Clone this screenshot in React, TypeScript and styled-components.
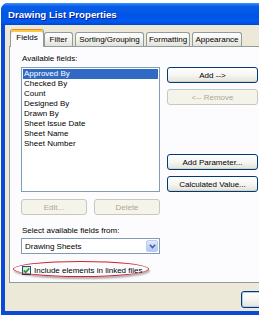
import React from "react";
import styled, { createGlobalStyle, css } from "styled-components";

const GlobalStyle = createGlobalStyle`
  html, body {
    margin: 0;
    padding: 0;
    background: #ffffff;
  }
  #root {
    width: 259px;
    height: 320px;
    overflow: hidden;
  }
`;

const FONT = `"Liberation Sans", Arial, sans-serif`;

const Window = styled.div`
  margin: 3px 0 0 1px;
  width: 330px;
  height: 312px;
  display: flex;
  flex-direction: column;
  border-radius: 7px 7px 0 0;
  overflow: hidden;
  background: #0b4ad6;
  font-family: ${FONT};
`;

const TitleBar = styled.div`
  height: 22px;
  flex: none;
  display: flex;
  align-items: center;
  padding-left: 7px;
  background: linear-gradient(
    180deg,
    #3d95ff 0%,
    #0a5fe8 14%,
    #0055e5 50%,
    #0058ee 85%,
    #0047d0 100%
  );
  color: #ffffff;
  font-weight: bold;
  font-size: 9.7px;
  text-shadow: 1px 1px 0 #0a1b8a;
`;

const Client = styled.div`
  flex: 1;
  margin: 0 0 4px 4px;
  background: #ece9d8;
  padding-top: 5px;
  display: flex;
  flex-direction: column;
`;

const TabStrip = styled.div`
  display: flex;
  align-items: flex-end;
  gap: 2px;
  height: 17px;
  margin: 0 0 -1px 5px;
  position: relative;
  z-index: 2;
`;

const Tab = styled.div<{ $w: number; $active?: boolean }>`
  width: ${(p) => p.$w}px;
  box-sizing: border-box;
  height: 14px;
  margin-bottom: 1px;
  display: flex;
  align-items: center;
  justify-content: center;
  font-size: 8px;
  color: #000000;
  border: 1px solid #919b9c;
  border-bottom: none;
  border-radius: 3px 3px 0 0;
  background: linear-gradient(#ffffff, #f3f3ef 50%, #e3e2da);

  ${(p) =>
    p.$active &&
    css`
      height: 18px;
      margin-bottom: 0;
      margin-right: -2px;
      padding-bottom: 3px;
      background: #fcfcfe;
      border-top-color: #e68b2c;
      box-shadow: inset 0 2px 0 #ffc73c;
    `}
`;

const Panel = styled.div`
  margin-left: 4px;
  height: 237px;
  box-sizing: border-box;
  border: 1px solid #919b9c;
  border-right: none;
  background: #fcfcfe;
  padding: 7px 0 0 11px;
  display: flex;
  flex-direction: column;
`;

const Label = styled.div<{ $top?: number }>`
  height: 10px;
  line-height: 10px;
  font-size: 8px;
  color: #000000;
  margin-top: ${(p) => p.$top ?? 0}px;
  padding-left: 1px;
`;

const MainRow = styled.div`
  display: flex;
  gap: 7px;
  margin-top: 3px;
  height: 125px;
`;

const ListBox = styled.div`
  width: 139px;
  height: 125px;
  box-sizing: border-box;
  border: 1px solid #7f9db9;
  background: #ffffff;
  padding: 1px;
`;

const ListItem = styled.div<{ $selected?: boolean }>`
  height: 10px;
  line-height: 10px;
  font-size: 8px;
  padding-left: 1px;
  color: ${(p) => (p.$selected ? "#ffffff" : "#000000")};
  background: ${(p) => (p.$selected ? "#316ac5" : "transparent")};
`;

const ButtonColumn = styled.div`
  width: 91px;
  display: flex;
  flex-direction: column;
  justify-content: space-between;
`;

const ButtonGroup = styled.div`
  display: flex;
  flex-direction: column;
  gap: 6px;
`;

const Button = styled.button<{ $w?: number }>`
  width: ${(p) => (p.$w ? `${p.$w}px` : "100%")};
  height: 16px;
  box-sizing: border-box;
  padding: 0;
  border: 1px solid #003c74;
  border-radius: 3px;
  background: linear-gradient(#ffffff, #f4f4f0 55%, #e3e2da);
  box-shadow: inset 0 -1px 0 #d6d0c5;
  font-family: ${FONT};
  font-size: 8px;
  color: #000000;
  flex: none;

  &:disabled {
    border-color: #c9c7ba;
    background: #f5f4ea;
    box-shadow: none;
    color: #aca899;
  }
`;

const EditRow = styled.div`
  display: flex;
  gap: 7px;
  margin-top: 7px;
`;

const Combo = styled.div`
  margin-top: 2px;
  width: 139px;
  height: 16px;
  box-sizing: border-box;
  border: 1px solid #7f9db9;
  background: #ffffff;
  display: flex;
  align-items: center;
  padding: 1px;
`;

const ComboText = styled.div`
  flex: 1;
  font-size: 8px;
  padding-left: 2px;
  color: #000000;
`;

const ComboArrow = styled.div`
  width: 12px;
  height: 12px;
  box-sizing: border-box;
  border: 1px solid #b9cdf7;
  border-radius: 2px;
  background: linear-gradient(#e1eafe, #c1d3fb 60%, #b4c8f6);
  display: flex;
  align-items: center;
  justify-content: center;
`;

const CheckRow = styled.div`
  position: relative;
  margin-top: 11px;
  height: 10px;
  display: flex;
  align-items: center;
  gap: 3px;
  padding-left: 1px;
  font-size: 8px;
  color: #000000;
`;

const CheckBox = styled.div`
  width: 9px;
  height: 9px;
  box-sizing: border-box;
  border: 1px solid #1c5180;
  background: linear-gradient(135deg, #dcdcd7, #ffffff);
  display: flex;
  align-items: center;
  justify-content: center;
`;

const Highlight = styled.div`
  position: absolute;
  left: -8px;
  top: -4px;
  width: 136px;
  height: 16px;
  box-sizing: border-box;
  border: 1.5px solid #cf2430;
  border-radius: 50%;
  box-shadow: 1px 2px 2px rgba(0, 0, 0, 0.3);
  pointer-events: none;
`;

const Footer = styled.div`
  display: flex;
  gap: 6px;
  padding: 8px 0 0 236px;
`;

const FooterButton = styled(Button)`
  height: 17px;
  border-color: #003c74;
  box-shadow: inset 0 0 0 1px #b6c9ee, inset 0 -1px 0 #d6d0c5;
`;

const fields = [
  "Approved By",
  "Checked By",
  "Count",
  "Designed By",
  "Drawn By",
  "Sheet Issue Date",
  "Sheet Name",
  "Sheet Number",
];

const tabs = [
  { label: "Fields", w: 34 },
  { label: "Filter", w: 29 },
  { label: "Sorting/Grouping", w: 69 },
  { label: "Formatting", w: 44 },
  { label: "Appearance", w: 50 },
];

export default function App() {
  return (
    <>
      <GlobalStyle />
      <Window>
        <TitleBar>Drawing List Properties</TitleBar>
        <Client>
          <TabStrip>
            {tabs.map((t, i) => (
              <Tab key={t.label} $w={t.w} $active={i === 0}>
                {t.label}
              </Tab>
            ))}
          </TabStrip>
          <Panel>
            <Label>Available fields:</Label>
            <MainRow>
              <ListBox>
                {fields.map((f, i) => (
                  <ListItem key={f} $selected={i === 0}>
                    {f}
                  </ListItem>
                ))}
              </ListBox>
              <ButtonColumn>
                <ButtonGroup>
                  <Button>Add --&gt;</Button>
                  <Button disabled>&lt;-- Remove</Button>
                </ButtonGroup>
                <ButtonGroup>
                  <Button>Add Parameter...</Button>
                  <Button>Calculated Value...</Button>
                </ButtonGroup>
              </ButtonColumn>
            </MainRow>
            <EditRow>
              <Button $w={66} disabled>
                Edit...
              </Button>
              <Button $w={66} disabled>
                Delete
              </Button>
            </EditRow>
            <Label $top={11}>Select available fields from:</Label>
            <Combo>
              <ComboText>Drawing Sheets</ComboText>
              <ComboArrow>
                <svg width="7" height="5" viewBox="0 0 7 5">
                  <path
                    d="M0.8 0.8 L3.5 3.6 L6.2 0.8"
                    fill="none"
                    stroke="#4d6185"
                    strokeWidth="1.6"
                  />
                </svg>
              </ComboArrow>
            </Combo>
            <CheckRow>
              <CheckBox>
                <svg width="7" height="7" viewBox="0 0 7 7">
                  <path
                    d="M0.8 3.4 L2.7 5.3 L6.2 1.4"
                    fill="none"
                    stroke="#21a121"
                    strokeWidth="1.6"
                  />
                </svg>
              </CheckBox>
              Include elements in linked files
              <Highlight />
            </CheckRow>
          </Panel>
          <Footer>
            {/* only the left edge of the dialog buttons is in view */}
            <FooterButton $w={75} aria-label="OK" />
            <FooterButton $w={75} aria-label="Cancel" />
          </Footer>
        </Client>
      </Window>
    </>
  );
}
